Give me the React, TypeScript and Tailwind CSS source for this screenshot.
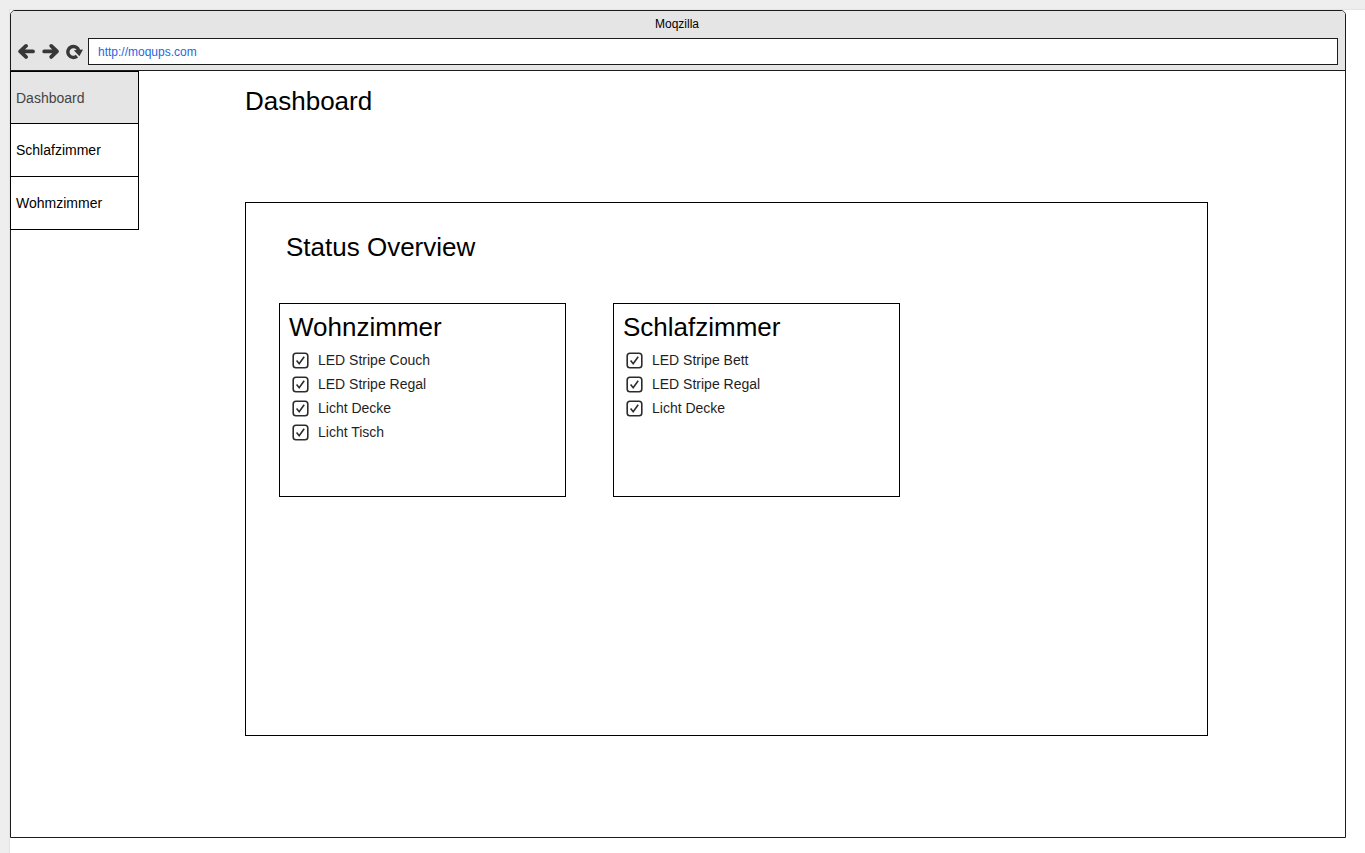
import { useState } from "react";

const navItems = ["Dashboard", "Schlafzimmer", "Wohmzimmer"];

const rooms = [
  {
    name: "Wohnzimmer",
    devices: ["LED Stripe Couch", "LED Stripe Regal", "Licht Decke", "Licht Tisch"],
  },
  {
    name: "Schlafzimmer",
    devices: ["LED Stripe Bett", "LED Stripe Regal", "Licht Decke"],
  },
];

function BackIcon() {
  return (
    <svg width="18" height="18" viewBox="0 0 18 18" fill="none" stroke="#383838" strokeWidth="3.8" strokeLinecap="round" strokeLinejoin="round" aria-hidden="true">
      <path d="M8 2.9 2.2 8.4l5.8 5.5M3 8.4H15" />
    </svg>
  );
}

function ForwardIcon() {
  return (
    <svg width="18" height="18" viewBox="0 0 18 18" fill="none" stroke="#383838" strokeWidth="3.8" strokeLinecap="round" strokeLinejoin="round" aria-hidden="true">
      <path d="M9.2 2.9l5.8 5.5-5.8 5.5M14.2 8.4H2.2" />
    </svg>
  );
}

function ReloadIcon() {
  return (
    <svg width="18" height="18" viewBox="0 0 18 18" aria-hidden="true">
      <path d="M11 13.1A5.5 5.5 0 1 1 12.7 7.5" fill="none" stroke="#383838" strokeWidth="3.4" />
      <path d="M7.8 7.2 17 6.6 13.4 13.2Z" fill="#383838" />
    </svg>
  );
}

function DeviceToggle({ id, label }: { id: string; label: string }) {
  const [on, setOn] = useState(true);
  return (
    <li className="flex h-6 items-center gap-[9px]">
      <span className="grid size-[17px] shrink-0">
        <input
          id={id}
          type="checkbox"
          checked={on}
          onChange={(e) => setOn(e.target.checked)}
          className="peer col-start-1 row-start-1 size-[17px] appearance-none rounded-[4px]"
        />
        <svg
          viewBox="0 0 17 17"
          className="pointer-events-none col-start-1 row-start-1 size-[17px] peer-checked:[&>path]:visible"
          fill="none"
          stroke="#2c2c2c"
          strokeWidth="1.6"
          aria-hidden="true"
        >
          <rect x="1.2" y="1.2" width="14.6" height="14.6" rx="2.8" />
          <path className="invisible" d="M4.6 8.6 7.2 11.8 12.2 4.8" />
        </svg>
      </span>
      <label htmlFor={id} className="text-sm text-[#1f1f1f]">
        {label}
      </label>
    </li>
  );
}

export default function App() {
  const [active, setActive] = useState("Dashboard");
  return (
    <div className="flex min-h-screen flex-col bg-[#eeeeee] pt-[10px] pl-[10px] font-['Liberation_Sans',Arial,sans-serif] text-black">
      <div className="flex grow flex-col bg-white pr-[19px] pb-[15px] shadow-[0_0_1px_1px_#e4e4e4]">
        <div className="flex grow flex-col rounded-t-[5px] border border-[#1c1c1e]">
          <header className="rounded-t-[4px] border-b border-[#1c1c1e] bg-[#e5e5e5] px-[7px] pb-[5px]">
            <div className="flex h-[27px] items-center justify-center pr-0.5 pb-0.5 text-xs">Moqzilla</div>
            <div className="flex items-center gap-[6px]">
              <button type="button" aria-label="Back">
                <BackIcon />
              </button>
              <button type="button" aria-label="Forward">
                <ForwardIcon />
              </button>
              <button type="button" aria-label="Reload">
                <ReloadIcon />
              </button>
              <input
                type="text"
                aria-label="Address"
                defaultValue="http://moqups.com"
                className="-ml-[2px] h-[27px] min-w-0 grow border border-[#1c1c1e] bg-white px-[9px] text-xs text-[#1f66e0]"
              />
            </div>
          </header>

          <div className="flex grow items-start">
            <nav className="-ml-px w-[129px] shrink-0 border border-black">
              <ul className="grid h-[157px] grid-rows-3 divide-y divide-black">
                {navItems.map((item) => (
                  <li key={item}>
                    <button
                      type="button"
                      onClick={() => setActive(item)}
                      aria-current={item === active ? "page" : undefined}
                      className={
                        item === active
                          ? "block size-full bg-[#e5e5e5] px-[5px] text-left text-sm text-[#444]"
                          : "block size-full bg-white px-[5px] text-left text-sm text-black"
                      }
                    >
                      {item}
                    </button>
                  </li>
                ))}
              </ul>
            </nav>

            <main className="min-w-0 grow pt-[14px] pr-[137px] pl-[106px]">
              <h1 className="text-[26px] leading-8">Dashboard</h1>
              <section className="mt-[85px] min-h-[534px] border border-black px-[33px] pt-7 pb-8">
                <h2 className="pl-[7px] text-[26px] leading-8">Status Overview</h2>
                <div className="mt-10 flex flex-wrap gap-[47px]">
                  {rooms.map((room) => (
                    <section key={room.name} className="min-h-[194px] w-[287px] border border-black pt-[7px]">
                      <h3 className="pl-[9px] text-[26px] leading-8">{room.name}</h3>
                      <ul className="mt-[5px] pl-3">
                        {room.devices.map((device) => (
                          <DeviceToggle key={device} id={`${room.name}-${device}`} label={device} />
                        ))}
                      </ul>
                    </section>
                  ))}
                </div>
              </section>
            </main>
          </div>
        </div>
      </div>
    </div>
  );
}
